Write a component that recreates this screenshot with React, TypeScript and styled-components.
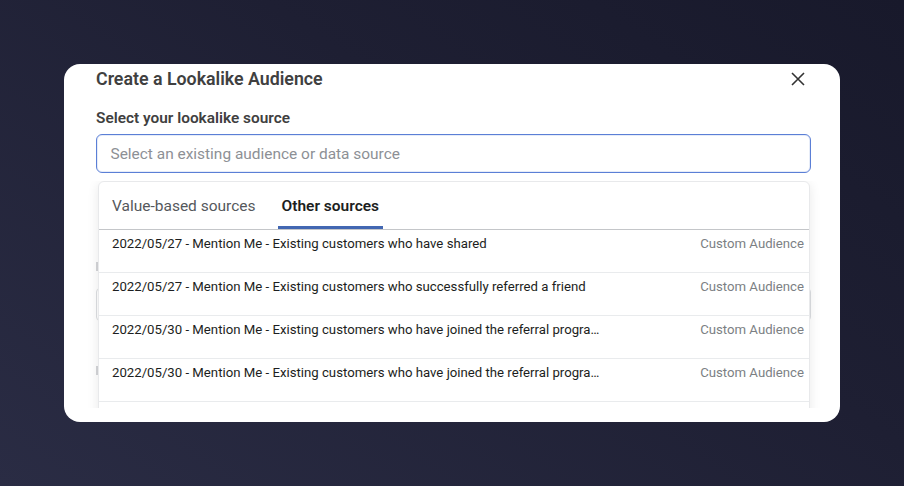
import { createGlobalStyle, styled } from "styled-components";

const ROWS = [
  "2022/05/27 - Mention Me - Existing customers who have shared",
  "2022/05/27 - Mention Me - Existing customers who successfully referred a friend",
  "2022/05/30 - Mention Me - Existing customers who have joined the referral program",
  "2022/05/30 - Mention Me - Existing customers who have joined the referral program",
  "",
];

const Global = createGlobalStyle`
  html, body {
    margin: 0;
    height: 100%;
    overflow: hidden;
  }
  body {
    font-family: Roboto, "Liberation Sans", sans-serif;
    -webkit-font-smoothing: antialiased;
  }
`;

const Backdrop = styled.div`
  width: 904px;
  height: 486px;
  box-sizing: border-box;
  padding: 64px;
  background: linear-gradient(215deg, #18192b 0%, #1e1f33 40%, #2a2c44 100%);
`;

const Modal = styled.section`
  height: 358px;
  box-sizing: border-box;
  padding: 0 29px 0 32px;
  background: #fff;
  border-radius: 16px;
  overflow: hidden;
`;

const Header = styled.header`
  height: 29px;
  display: flex;
  align-items: center;
  justify-content: space-between;
  padding-right: 6px;
`;

const Title = styled.h2`
  margin: 0;
  font-size: 17.8px;
  font-weight: 600;
  color: #404040;
`;

const Close = styled.button`
  width: 14px;
  height: 14px;
  padding: 0;
  border: 0;
  background: none;
  display: flex;
  color: #333;
`;

const Label = styled.label`
  display: block;
  margin-top: 17px;
  font-size: 15.4px;
  line-height: 17px;
  font-weight: 600;
  color: #404040;
`;

const Field = styled.div`
  position: relative;
  margin-top: 7px;
`;

const Input = styled.div`
  height: 39px;
  box-sizing: border-box;
  padding-left: 13.5px;
  display: flex;
  align-items: center;
  border: 1px solid #5b7fd6;
  border-radius: 6px;
  box-shadow: 0 0 0 1px #e6ecf8 inset;
  font-size: 15.45px;
  color: #8d9095;
`;

/* the form behind the open menu only peeks out at the menu's left edge */
const CoveredMark = styled.div<{ $top: number }>`
  width: 2px;
  height: 9px;
  margin-top: ${(p) => p.$top}px;
  background: #d4d5d8;
`;

const CoveredInput = styled.div`
  margin-top: 17px;
  height: 31px;
  border: 1px solid #dcdee1;
  border-radius: 4px;
`;

const DropdownClip = styled.div`
  position: absolute;
  top: 47px;
  left: -12px;
  right: -13px;
  height: 227px;
  padding: 0 14px;
  box-sizing: border-box;
  overflow: hidden;
`;

const Dropdown = styled.div`
  height: 240px;
  box-sizing: border-box;
  background: #fff;
  border: 1px solid #e8e9eb;
  border-radius: 6px 6px 0 0;
  box-shadow: 0 2px 12px rgba(0, 0, 0, 0.09);
`;

const Tabs = styled.div`
  height: 48px;
  box-sizing: border-box;
  padding-left: 9px;
  display: flex;
  gap: 18px;
  border-bottom: 1px solid #c4c6c9;
`;

const Tab = styled.div<{ $active?: boolean }>`
  height: 47px;
  box-sizing: border-box;
  padding: 3px 4px 0;
  display: flex;
  align-items: center;
  font-size: 15.5px;
  font-weight: ${(p) => (p.$active ? 600 : 400)};
  color: ${(p) => (p.$active ? "#1c1e21" : "#55585c")};
  border-bottom: 3px solid ${(p) => (p.$active ? "#4267b2" : "transparent")};
`;

const Row = styled.div`
  height: 43px;
  box-sizing: border-box;
  padding: 6px 5px 0 13px;
  display: flex;
  justify-content: space-between;
  border-bottom: 1px solid #e9ebed;
  font-size: 13.2px;
  line-height: 16px;
`;

const Name = styled.span`
  max-width: 489px;
  white-space: nowrap;
  overflow: hidden;
  text-overflow: ellipsis;
  color: #1c1e21;
`;

const Kind = styled.span`
  flex: none;
  color: #7c7f84;
`;

export default function App() {
  return (
    <Backdrop>
      <Global />
      <Modal>
        <Header>
          <Title>Create a Lookalike Audience</Title>
          <Close aria-label="Close">
            <svg width="14" height="14" viewBox="0 0 14 14" fill="none" stroke="currentColor" strokeWidth="1.6">
              <path d="M1 1l12 12M13 1L1 13" />
            </svg>
          </Close>
        </Header>
        <Label>Select your lookalike source</Label>
        <Field>
          <Input>Select an existing audience or data source</Input>
          <CoveredMark $top={89} />
          <CoveredInput />
          <CoveredMark $top={45} />
          <DropdownClip>
            <Dropdown>
              <Tabs>
                <Tab>Value-based sources</Tab>
                <Tab $active>Other sources</Tab>
              </Tabs>
              {ROWS.map((name, i) => (
                <Row key={i}>
                  <Name>{name}</Name>
                  {name && <Kind>Custom Audience</Kind>}
                </Row>
              ))}
            </Dropdown>
          </DropdownClip>
        </Field>
      </Modal>
    </Backdrop>
  );
}
